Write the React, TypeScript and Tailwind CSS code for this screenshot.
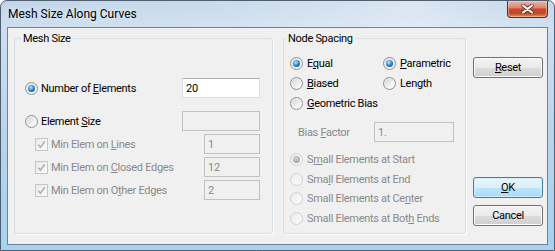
import React from "react";

const FONT = "[font-family:Roboto,'Liberation_Sans',sans-serif]";

function Radio({ checked = false, disabled = false }: { checked?: boolean; disabled?: boolean }) {
  return (
    <span
      className={
        disabled
          ? "flex h-[13px] w-[13px] shrink-0 items-center justify-center rounded-full border border-[#cfcfcf] bg-[linear-gradient(135deg,#ececec,#fbfbfb)]"
          : "flex h-[13px] w-[13px] shrink-0 items-center justify-center rounded-full border border-[#8c8f91] bg-[linear-gradient(135deg,#cfcfcf,#f6f6f6_70%,#ffffff)] shadow-[inset_0_0_0_1px_#f4f4f4]"
      }
    >
      {checked &&
        (disabled ? (
          <span className="h-[7px] w-[7px] rounded-full bg-[radial-gradient(circle_at_40%_35%,#d6d6d6,#a3a3a3_70%,#9a9a9a)]" />
        ) : (
          <span className="h-[7px] w-[7px] rounded-full bg-[radial-gradient(circle_at_40%_35%,#b6ecff,#3a8fd0_45%,#12508e_80%,#0c3b6b)]" />
        ))}
    </span>
  );
}

function Check() {
  return (
    <span className="flex h-[13px] w-[13px] shrink-0 items-center justify-center border border-[#c6c6c6] bg-[linear-gradient(135deg,#eaeaea,#fbfbfb)]">
      <svg width="9" height="9" viewBox="0 0 9 9">
        <path d="M1.3 4.6 L3.4 7.2 L7.8 1.2" stroke="#aeaeae" strokeWidth="1.5" fill="none" />
      </svg>
    </span>
  );
}

function TextBox({ value = "", disabled = false, w }: { value?: string; disabled?: boolean; w: string }) {
  return (
    <div
      className={
        (disabled
          ? "border border-[#c2c2c2] bg-[#f0f0f0] text-[#8a8a8a] "
          : "border border-[#dbdfe6] border-t-[#abadb3] bg-white text-black ") +
        "flex h-[20px] shrink-0 items-center pl-[3px] " +
        w
      }
    >
      {value}
    </div>
  );
}

function Button({ children, def = false, cls }: { children: React.ReactNode; def?: boolean; cls: string }) {
  return (
    <div
      className={
        (def
          ? "border-[#3c7fb1] bg-[linear-gradient(to_bottom,#eaf6fd_0%,#d9f0fc_50%,#bee6fd_51%,#a7d9f5_100%)] shadow-[inset_0_0_0_1px_#d2eefc] "
          : "border-[#707070] bg-[linear-gradient(to_bottom,#f2f2f2_0%,#ebebeb_50%,#dddddd_51%,#cfcfcf_100%)] shadow-[inset_0_0_0_1px_#fbfbfb] ") +
        "flex h-[21px] w-[70px] items-center justify-center rounded-[3px] border text-black " +
        cls
      }
    >
      {children}
    </div>
  );
}

export default function App() {
  return (
    <div className={`${FONT} text-[11px] tracking-[-0.3px] leading-[13px]`}>
      <div className="flex h-[251px] w-[555px] flex-col rounded-t-[7px] border border-[#4e5f72] bg-[linear-gradient(to_bottom,#c2d5e8_0%,#cddff0_12%,#b9d3ea_55%,#a6d3f1_100%)]">
        {/* title bar */}
        <div className="flex h-[26px] shrink-0 items-start rounded-t-[6px] bg-[linear-gradient(to_right,rgba(255,255,255,0)_0%,rgba(255,255,255,0.1)_35%,rgba(255,255,255,0.38)_75%,rgba(255,255,255,0.05)_100%)]">
          <div className="flex h-[26px] flex-1 items-center pl-[7px] pt-[1px] text-[12px] tracking-normal text-black [text-shadow:0_0_6px_rgba(255,255,255,0.9)]">
            Mesh Size Along Curves
          </div>
          <div className="mr-[6px] flex h-[17px] w-[41px] items-center justify-center rounded-b-[4px] border border-t-0 border-[#6d2517] bg-[linear-gradient(to_bottom,#eab5a6_0%,#dc8b77_40%,#c7492c_52%,#c6492b_78%,#e3905e_100%)] shadow-[inset_0_0_0_1px_rgba(255,220,200,0.45)]">
            <svg width="13" height="10" viewBox="0 0 13 10">
              <path d="M2 1.5 L11 8.5 M11 1.5 L2 8.5" stroke="#6a2315" strokeWidth="3.6" strokeLinecap="round" />
              <path d="M2 1.5 L11 8.5 M11 1.5 L2 8.5" stroke="#ffffff" strokeWidth="2.2" strokeLinecap="round" />
            </svg>
          </div>
        </div>

        {/* client area */}
        <div className="mx-[6px] flex h-[218px] shrink-0 items-start border border-[#6f8297] bg-[#f0f0f0] pl-[6px] pt-[10px] text-black">
          {/* Mesh Size group */}
          <div className="relative h-[196px] w-[259px] shrink-0 rounded-[3px] border border-[#d5dfe5] shadow-[1px_1px_0_#ffffff]">
            <span className="absolute -top-[7px] left-[6px] bg-[#f0f0f0] px-[2px] leading-[13px]">Mesh Size</span>
            <div className="flex flex-col pl-[10px] pr-[12px] pt-[39px]">
              <div className="flex h-[20px] items-center justify-between">
                <div className="flex items-center">
                  <Radio checked />
                  <span className="ml-[3px]">
                    Number of <u>E</u>lements
                  </span>
                </div>
                <TextBox value="20" w="w-[78px]" />
              </div>
              <div className="mt-[13px] flex h-[20px] items-center justify-between">
                <div className="flex items-center">
                  <Radio />
                  <span className="ml-[3px]">
                    Element <u>S</u>ize
                  </span>
                </div>
                <TextBox disabled w="w-[78px]" />
              </div>
              <div className="mt-[3px] flex h-[20px] items-center justify-between pl-[10px] text-[#8a8a8a]">
                <div className="flex items-center">
                  <Check />
                  <span className="ml-[3px]">
                    Min Elem on <u>L</u>ines
                  </span>
                </div>
                <TextBox disabled value="1" w="w-[56px]" />
              </div>
              <div className="mt-[3px] flex h-[20px] items-center justify-between pl-[10px] text-[#8a8a8a]">
                <div className="flex items-center">
                  <Check />
                  <span className="ml-[3px]">
                    Min Elem on <u>C</u>losed Edges
                  </span>
                </div>
                <TextBox disabled value="12" w="w-[56px]" />
              </div>
              <div className="mt-[3px] flex h-[20px] items-center justify-between pl-[10px] text-[#8a8a8a]">
                <div className="flex items-center">
                  <Check />
                  <span className="ml-[3px]">
                    Min Elem on O<u>t</u>her Edges
                  </span>
                </div>
                <TextBox disabled value="2" w="w-[56px]" />
              </div>
            </div>
          </div>

          {/* Node Spacing group */}
          <div className="relative ml-[10px] h-[196px] w-[183px] shrink-0 rounded-[3px] border border-[#d5dfe5] shadow-[1px_1px_0_#ffffff]">
            <span className="absolute -top-[7px] left-[2px] bg-[#f0f0f0] px-[2px] leading-[13px]">Node Spacing</span>
            <div className="flex flex-col pl-[6px] pr-[11px] pt-[14px]">
              <div className="grid grid-cols-[93px_1fr]">
                <div className="flex h-[20px] items-center">
                  <Radio checked />
                  <span className="ml-[4px]">
                    E<u>q</u>ual
                  </span>
                </div>
                <div className="flex h-[20px] items-center">
                  <Radio checked />
                  <span className="ml-[4px]">
                    <u>P</u>arametric
                  </span>
                </div>
                <div className="flex h-[20px] items-center">
                  <Radio />
                  <span className="ml-[4px]">
                    <u>B</u>iased
                  </span>
                </div>
                <div className="flex h-[20px] items-center">
                  <Radio />
                  <span className="ml-[4px]">Length</span>
                </div>
                <div className="col-span-2 flex h-[20px] items-center">
                  <Radio />
                  <span className="ml-[4px]">
                    <u>G</u>eometric Bias
                  </span>
                </div>
              </div>
              <div className="mt-[9px] flex h-[20px] items-center justify-between pl-[8px] text-[#8a8a8a]">
                <span>
                  Bias <u>F</u>actor
                </span>
                <TextBox disabled value="1." w="w-[80px]" />
              </div>
              <div className="mt-[8px] flex flex-col text-[#8a8a8a]">
                <div className="flex h-[19.5px] items-center">
                  <Radio checked disabled />
                  <span className="ml-[4px]">
                    S<u>m</u>all Elements at Start
                  </span>
                </div>
                <div className="flex h-[19.5px] items-center">
                  <Radio disabled />
                  <span className="ml-[4px]">
                    Sma<u>l</u>l Elements at End
                  </span>
                </div>
                <div className="flex h-[19.5px] items-center">
                  <Radio disabled />
                  <span className="ml-[4px]">
                    Small Elements at Ce<u>n</u>ter
                  </span>
                </div>
                <div className="flex h-[19.5px] items-center">
                  <Radio disabled />
                  <span className="ml-[4px]">
                    Small Elements at Bot<u>h</u> Ends
                  </span>
                </div>
              </div>
            </div>
          </div>

          {/* Buttons */}
          <div className="ml-[7px] flex w-[70px] shrink-0 flex-col">
            <Button cls="mt-[19px]">
              <span>
                <u>R</u>eset
              </span>
            </Button>
            <Button def cls="mt-[99px]">
              <span>
                <u>O</u>K
              </span>
            </Button>
            <Button cls="mt-[7px]">
              <span>Cancel</span>
            </Button>
          </div>
        </div>
      </div>
    </div>
  );
}
